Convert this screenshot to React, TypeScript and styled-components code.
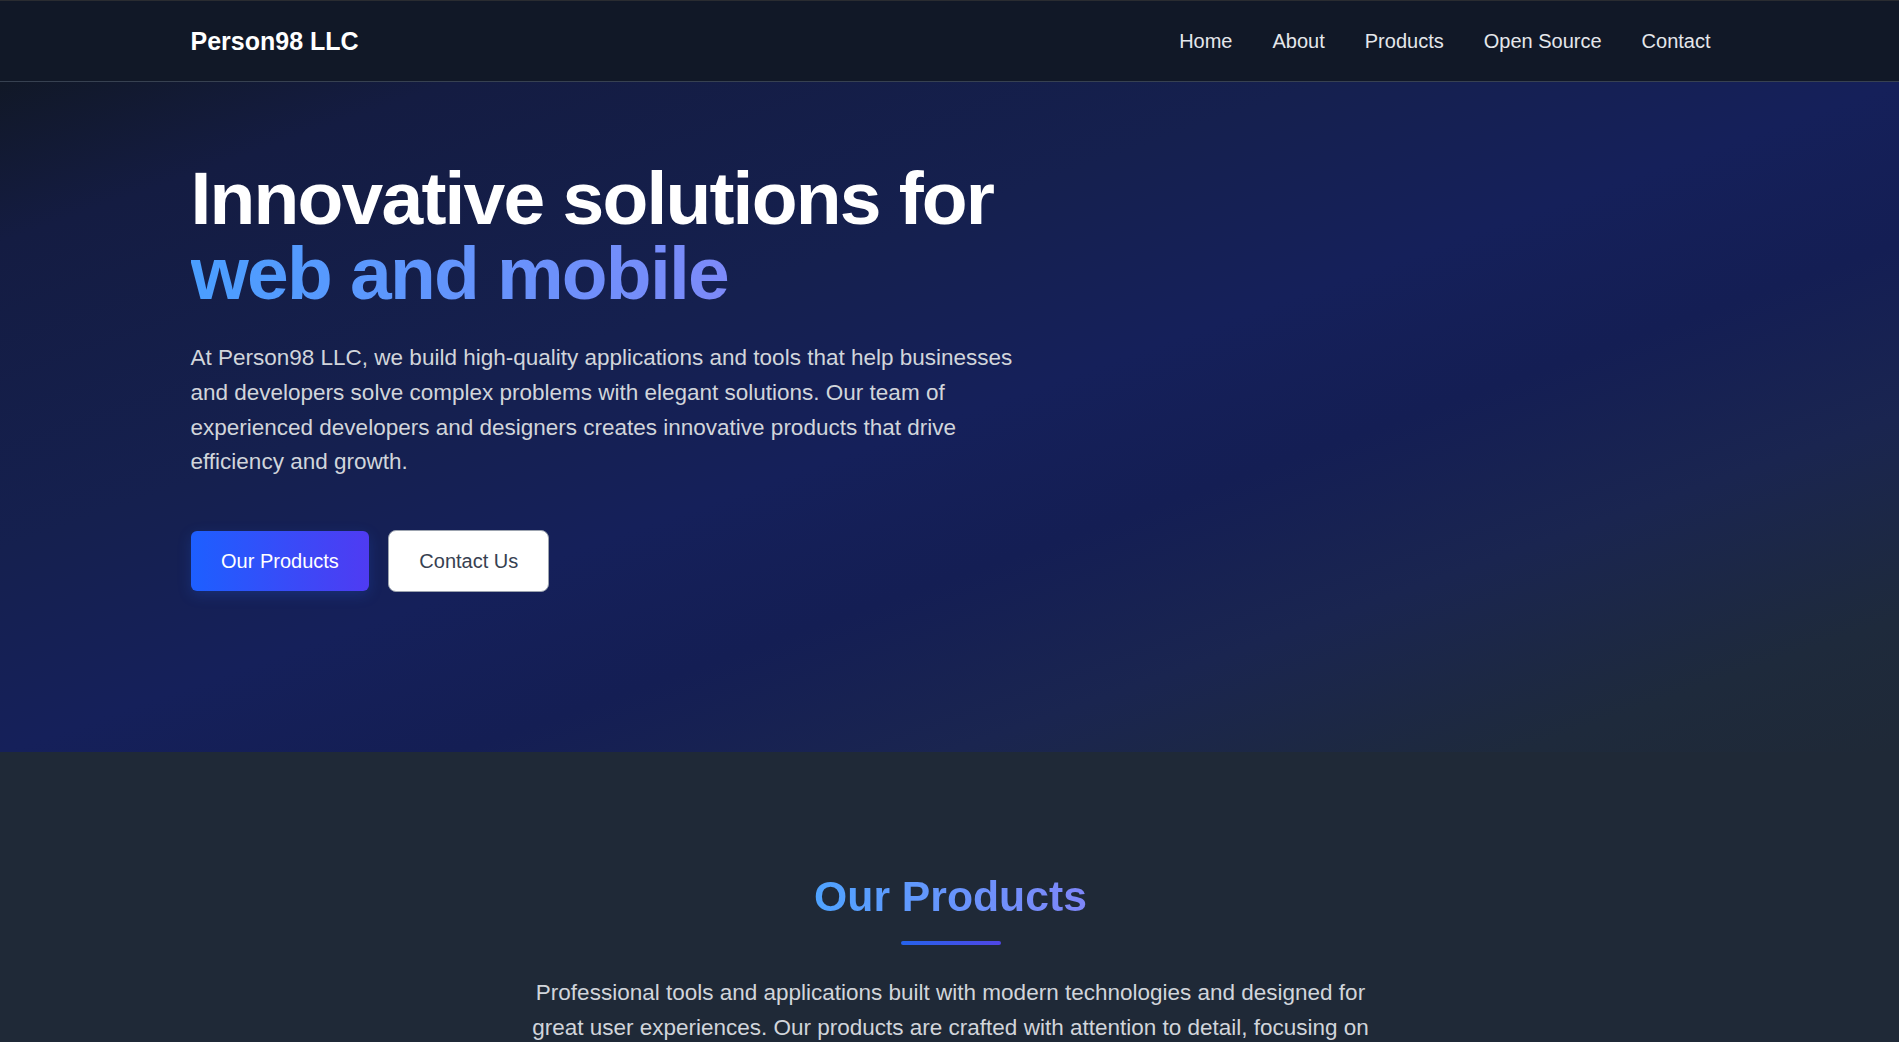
import React from "react";
import styled, { createGlobalStyle } from "styled-components";

const GlobalStyle = createGlobalStyle`
  *, *::before, *::after { box-sizing: border-box; }
  html, body {
    margin: 0;
    padding: 0;
    background: #1f2937;
  }
  body {
    font-family: "Liberation Sans", Arial, Helvetica, sans-serif;
    -webkit-font-smoothing: antialiased;
  }
`;

const Container = styled.div`
  max-width: 1600px;
  margin: 0 auto;
  padding: 0 39px 0 41px;
`;

const NavBar = styled.header`
  background: #111827;
  border-top: 1px solid #2a2c31;
  border-bottom: 1px solid #374151;
`;

const NavInner = styled(Container)`
  height: 80px;
  display: flex;
  align-items: center;
  justify-content: space-between;
`;

const Logo = styled.a`
  font-size: 25px;
  font-weight: 700;
  color: #ffffff;
  text-decoration: none;
`;

const NavList = styled.ul`
  display: flex;
  gap: 40px;
  list-style: none;
  margin: 0;
  padding: 0;
`;

const NavLink = styled.a`
  font-size: 20px;
  color: #e5e7eb;
  text-decoration: none;
`;

const Hero = styled.section`
  background: linear-gradient(
    to bottom right,
    #111827 0%,
    #141c42 12%,
    #15204f 35%,
    #15205a 50%,
    #141e54 62%,
    #1a2550 75%,
    #1e2a3c 90%,
    #1f2937 100%
  );
  padding: 79px 0 159.5px;
`;

const HeroTitle = styled.h1`
  margin: 0 0 30px;
  font-size: 75px;
  line-height: 1;
  font-weight: 700;
  letter-spacing: -0.024em;
  color: #ffffff;
`;

const GradientLine = styled.span`
  display: inline-block;
  background: linear-gradient(90deg, #4a9eff 0%, #7d8af9 100%);
  -webkit-background-clip: text;
  background-clip: text;
  color: transparent;
`;

const Lead = styled.p<{ $center?: boolean }>`
  margin: ${(p) => (p.$center ? "0 auto" : "0")};
  max-width: 840px;
  font-size: 22.5px;
  line-height: 1.545;
  color: #d1d5db;
  text-align: ${(p) => (p.$center ? "center" : "left")};
`;

const ButtonRow = styled.div`
  display: flex;
  align-items: center;
  gap: 19px;
  margin-top: 50px;
`;

const PrimaryButton = styled.a`
  display: inline-block;
  padding: 18.5px 30.5px;
  font-size: 20px;
  color: #ffffff;
  text-decoration: none;
  border-radius: 6px;
  background: linear-gradient(90deg, #1d5fff 0%, #4f3bf2 100%);
  box-shadow: 0 4px 14px rgba(37, 99, 235, 0.22);
`;

const SecondaryButton = styled.a`
  display: inline-block;
  padding: 18.5px 30px;
  font-size: 20px;
  color: #374151;
  text-decoration: none;
  border-radius: 8px;
  background: #ffffff;
  border: 1.5px solid #9ca3af;
`;

const Products = styled.section`
  background: #1f2937;
  padding: 119px 0 120px;
`;

const SectionTitle = styled.h2`
  margin: 0;
  text-align: center;
  font-size: 42.7px;
  line-height: 1.2;
  font-weight: 700;
`;

const TitleText = styled.span`
  background: linear-gradient(90deg, #4fa3ff 0%, #7f86f9 100%);
  -webkit-background-clip: text;
  background-clip: text;
  color: transparent;
`;

const Underline = styled.div`
  width: 100px;
  height: 4.5px;
  margin: 19px auto 31px;
  border-radius: 3px;
  background: linear-gradient(90deg, #2563eb 0%, #4f46e5 100%);
`;

const navItems = ["Home", "About", "Products", "Open Source", "Contact"];

export default function App() {
  return (
    <>
      <GlobalStyle />
      <NavBar>
        <NavInner>
          <Logo href="#">Person98 LLC</Logo>
          <nav>
            <NavList>
              {navItems.map((item) => (
                <li key={item}>
                  <NavLink href="#">{item}</NavLink>
                </li>
              ))}
            </NavList>
          </nav>
        </NavInner>
      </NavBar>

      <Hero>
        <Container>
          <HeroTitle>
            Innovative solutions for
            <br />
            <GradientLine>web and mobile</GradientLine>
          </HeroTitle>
          <Lead>
            At Person98 LLC, we build high-quality applications and tools that help businesses
            and developers solve complex problems with elegant solutions. Our team of experienced
            developers and designers creates innovative products that drive efficiency and growth.
          </Lead>
          <ButtonRow>
            <PrimaryButton href="#">Our Products</PrimaryButton>
            <SecondaryButton href="#">Contact Us</SecondaryButton>
          </ButtonRow>
        </Container>
      </Hero>

      <Products>
        <Container>
          <SectionTitle>
            <TitleText>Our Products</TitleText>
          </SectionTitle>
          <Underline />
          <Lead $center>
            Professional tools and applications built with modern technologies and designed for
            great user experiences. Our products are crafted with attention to detail, focusing on
            performance, reliability and ease of use.
          </Lead>
        </Container>
      </Products>
    </>
  );
}
